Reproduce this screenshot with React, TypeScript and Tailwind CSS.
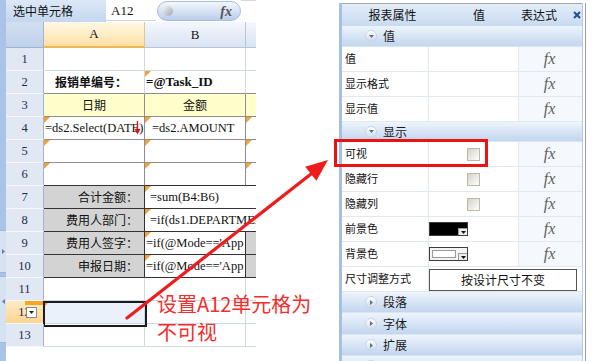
import React from "react";

const SERIF = "font-['Liberation_Serif','Noto_Sans_CJK_SC',serif]";
const CJK = "font-['Noto_Sans_CJK_SC','Liberation_Sans',sans-serif]";

const Tri = () => (
  <span className="absolute left-0 top-0 w-0 h-0 border-t-[6px] border-t-[#f2a23a] border-r-[6px] border-r-transparent" />
);

function RowHead({ n, sel }: { n: number; sel?: boolean }) {
  return (
    <div
      className={`relative w-[38px] h-full shrink-0 flex items-center justify-center border-r border-r-[#9fb4d1] border-b border-b-[#f4f7fb] ${SERIF} text-[12.5px] text-[#1c2d4b] ${
        sel ? "bg-linear-to-b from-[#fdebc4] to-[#fcd590]" : "bg-[#e1e8f3]"
      }`}
    >
      {n}
      {sel && (
        <>
          <span className="absolute right-0 top-0 w-[18px] h-[4px] bg-[#f5a623]" />
          <span className="absolute left-[20px] top-[6px] w-[11px] h-[11px] bg-white border border-[#8a8a8a] flex items-center justify-center">
            <svg width="5" height="3" viewBox="0 0 5 3">
              <path d="M0 0H5L2.5 3Z" fill="#222" />
            </svg>
          </span>
        </>
      )}
    </div>
  );
}

function Fx() {
  return (
    <div className="flex-1 bg-[#f5f8fd] flex items-center justify-center">
      <span className={`${SERIF} italic text-[16px] text-[#5f5f5f] pr-[2px]`}>fx</span>
    </div>
  );
}

function Prop({ name, children, fx = true }: { name: string; children?: React.ReactNode; fx?: boolean }) {
  return (
    <div className="flex h-[25px] border-b border-[#e2e8f0]">
      <div className={`w-[87px] shrink-0 border-r border-[#e2e8f0] bg-white pl-[3px] pt-[5px] text-[11px] leading-[13px] text-[#111] ${CJK}`}>
        {name}
      </div>
      {fx ? (
        <>
          <div className="w-[90px] shrink-0 border-r border-[#e2e8f0] bg-white">{children}</div>
          <Fx />
        </>
      ) : (
        <div className="flex-1 bg-white">{children}</div>
      )}
    </div>
  );
}

function Group({ label, open, h }: { label: string; open?: boolean; h: string }) {
  return (
    <div className={`flex items-center ${h} shrink-0 bg-linear-to-b from-[#eef4fc] to-[#c2d6ef] border-b border-[#dbe6f4]`}>
      <div className="ml-[23px] w-[12px] h-[12px] rounded-full bg-linear-to-b from-white to-[#d0dbea] border border-[#c9d5e5] flex items-center justify-center">
        {open ? (
          <svg width="5" height="3" viewBox="0 0 5 3">
            <path d="M0 0H5L2.5 3Z" fill="#5b6f8e" />
          </svg>
        ) : (
          <svg width="3" height="5" viewBox="0 0 3 5">
            <path d="M0 0V5L3 2.5Z" fill="#5b6f8e" />
          </svg>
        )}
      </div>
      <span className={`ml-[6px] text-[12px] text-[#1a1a1a] ${CJK}`}>{label}</span>
    </div>
  );
}

function Checkbox() {
  return (
    <div className="ml-[38px] mt-[6px] w-[13px] h-[13px] border border-[#c2b9a5] bg-linear-to-br from-[#d4d2ca] to-white" />
  );
}

function ColorBox({ dark }: { dark?: boolean }) {
  return (
    <div className={`relative mt-[5px] w-[39px] h-[14px] border border-[#3c3c3c] ${dark ? "bg-black" : "bg-[#f4f4f4] p-[2px]"}`}>
      {!dark && <div className="w-[24px] h-[8px] bg-white border border-[#9a9a9a]" />}
      <span className="absolute right-0 bottom-0 w-[9px] h-[7px] bg-[#ececec] border-l border-t border-[#9a9a9a] flex items-end justify-center pb-[1px]">
        <svg width="5" height="3" viewBox="0 0 5 3">
          <path d="M0 0H5L2.5 3Z" fill="#111" />
        </svg>
      </span>
    </div>
  );
}

const L = "border-[#d0d7e5]";

export default function App() {
  return (
    <div className={`relative w-[606px] h-[361px] bg-white overflow-hidden flex ${CJK}`}>
      {/* left strip */}
      <div className="w-[6px] h-full shrink-0 flex flex-col bg-[#a9c4e7]">
        <div className="h-[230px]" />
        <div className="h-[43px] bg-[#d6e2f2] border-y border-[#9fb8da] flex items-center justify-center">
          <svg width="3" height="5" viewBox="0 0 3 5">
            <path d="M0 0V5L3 2.5Z" fill="#5b7fb0" />
          </svg>
        </div>
        <div className="h-[3px]" />
        <div className="h-[67px] bg-[#d6e2f2] border-y border-[#9fb8da] flex items-start justify-center pt-[22px]">
          <svg width="3" height="5" viewBox="0 0 3 5">
            <path d="M3 0V5L0 2.5Z" fill="#5b7fb0" />
          </svg>
        </div>
      </div>

      {/* spreadsheet */}
      <div className="w-[250px] shrink-0 flex flex-col">
        {/* toolbar */}
        <div className="flex h-[22px] items-center">
          <div className="w-[100px] h-full bg-linear-to-b from-[#dce8f7] to-[#c4d7ef] flex items-center pl-[7px] text-[12px] text-[#111]">
            选中单元格
          </div>
          <div className={`w-[50px] h-[20px] bg-white border-b border-[#c9d6e8] flex items-center pl-[5px] ${SERIF} text-[13px] text-[#111]`}>
            A12
          </div>
          <div className="ml-[1px] w-[84px] h-[20px] rounded-full border border-[#a9bedb] bg-linear-to-b from-[#f3f7fd] via-[#d6e3f4] to-[#b9cde9] flex items-center justify-between px-[5px]">
            <span className="w-[10px] h-[10px] rounded-full bg-linear-to-br from-[#f4f4f4] to-[#9da7b4]" />
            <span className={`${SERIF} italic font-bold text-[14px] text-[#555] pr-[3px]`}>fx</span>
          </div>
          <div className="flex-1 h-full bg-white border-t border-[#d8d8d8]" />
        </div>

        {/* column header */}
        <div className={`flex h-[26px] ${SERIF} text-[13px] text-[#111]`}>
          <div className="w-[38px] bg-linear-to-b from-[#d3dff0] to-[#bfd1ea] border-r border-[#9fb4d1] border-b border-b-[#9fb4d1]" />
          <div className="w-[101px] bg-linear-to-b from-[#fff8e6] to-[#ffe0a4] border-r border-r-[#d9c7a0] border-b-2 border-b-[#f2b655] flex items-center justify-center">
            A
          </div>
          <div className="w-[101px] bg-linear-to-b from-[#f4f7fc] to-[#dae4f2] border-r border-r-[#b4c5dc] border-b border-b-[#b4c5dc] flex items-center justify-center">
            B
          </div>
          <div className="flex-1 bg-linear-to-b from-[#f4f7fc] to-[#dae4f2] border-b border-b-[#b4c5dc]" />
        </div>

        {/* row 1 */}
        <div className="flex h-[23px]">
          <RowHead n={1} />
          <div className={`w-[101px] border-r border-b ${L}`} />
          <div className={`w-[101px] border-r border-b ${L}`} />
          <div className={`flex-1 border-b ${L}`} />
        </div>
        {/* row 2 */}
        <div className="flex h-[23px]">
          <RowHead n={2} />
          <div className="w-[101px] border-r border-r-[#d0d7e5] border-b border-b-[#8e8e8e] flex items-center pl-[11px] font-bold text-[12px] text-[#111]">
            报销单编号：
          </div>
          <div className={`relative w-[101px] border-r border-r-[#d0d7e5] border-b border-b-[#8e8e8e] flex items-center pl-[1px] ${SERIF} font-bold text-[13px] text-[#111]`}>
            <Tri />
            =@Task_ID
          </div>
          <div className="flex-1 border-b border-b-[#8e8e8e]" />
        </div>
        {/* row 3 */}
        <div className="flex h-[23px] text-[12px] text-[#111]">
          <RowHead n={3} />
          <div className="w-[101px] bg-[#ffffcc] border-r border-b border-[#8e8e8e] flex items-center justify-center">日期</div>
          <div className="w-[101px] bg-[#ffffcc] border-r border-b border-[#8e8e8e] flex items-center justify-center">金额</div>
          <div className="flex-1 bg-[#ffffcc] border-b border-[#8e8e8e]" />
        </div>
        {/* row 4 */}
        <div className={`flex h-[23px] ${SERIF} text-[12.5px] text-[#111]`}>
          <RowHead n={4} />
          <div className="relative w-[101px] border-r border-b border-[#8e8e8e] flex items-center pl-[1px] overflow-hidden whitespace-nowrap">
            <Tri />
            =ds2.Select(DATE)
            <svg className="absolute left-[90px] top-[4px]" width="7" height="14" viewBox="0 0 7 14">
              <path d="M3.5 0V12" stroke="#e01010" strokeWidth="1.3" />
              <path d="M0.5 8L3.5 13.5L6.5 8Z" fill="#e01010" />
            </svg>
          </div>
          <div className="relative w-[101px] border-r border-b border-[#8e8e8e] flex items-center pl-[7px]">
            <Tri />
            =ds2.AMOUNT
          </div>
          <div className="relative flex-1 border-b border-[#8e8e8e]">
            <Tri />
          </div>
        </div>
        {/* row 5 */}
        <div className="flex h-[23px]">
          <RowHead n={5} />
          <div className="relative w-[101px] border-r border-b border-[#8e8e8e]">
            <Tri />
          </div>
          <div className="relative w-[101px] border-r border-b border-[#8e8e8e]">
            <Tri />
          </div>
          <div className="relative flex-1 border-b border-[#8e8e8e]">
            <Tri />
          </div>
        </div>
        {/* row 6 */}
        <div className="flex h-[23px]">
          <RowHead n={6} />
          <div className="relative w-[101px] border-r border-r-[#8e8e8e] border-b border-b-[#333]">
            <Tri />
          </div>
          <div className="relative w-[101px] border-r border-r-[#8e8e8e] border-b border-b-[#333]">
            <Tri />
          </div>
          <div className="relative flex-1 border-b border-b-[#333]">
            <Tri />
          </div>
        </div>
        {/* row 7 */}
        <div className="flex h-[23px] text-[12px] text-[#111]">
          <RowHead n={7} />
          <div className="w-[101px] bg-[#d3d3d3] border-r border-b border-[#333] flex items-center justify-end pr-[6px]">合计金额：</div>
          <div className={`relative flex-1 border-b border-[#333] flex items-center pl-[5px] ${SERIF} text-[12.5px] whitespace-nowrap overflow-hidden`}>
            <Tri />
            =sum(B4:B6)
          </div>
        </div>
        {/* row 8 */}
        <div className="flex h-[23px] text-[12px] text-[#111]">
          <RowHead n={8} />
          <div className="w-[101px] bg-[#d3d3d3] border-r border-b border-[#333] flex items-center justify-end pr-[6px]">费用人部门：</div>
          <div className={`relative flex-1 border-b border-[#333] flex items-center pl-[5px] ${SERIF} text-[12.5px] whitespace-nowrap overflow-hidden`}>
            <Tri />
            =if(ds1.DEPARTMENT
          </div>
        </div>
        {/* row 9 */}
        <div className="flex h-[23px] text-[12px] text-[#111]">
          <RowHead n={9} />
          <div className="w-[101px] bg-[#d3d3d3] border-r border-b border-[#333] flex items-center justify-end pr-[6px]">费用人签字：</div>
          <div className={`relative w-[101px] border-r border-b border-[#333] flex items-center pl-[1px] ${SERIF} text-[12.5px] whitespace-nowrap overflow-hidden`}>
            <Tri />
            =if(@Mode=='App
          </div>
          <div className="flex-1 bg-[#d3d3d3] border-b border-[#333]" />
        </div>
        {/* row 10 */}
        <div className="flex h-[23px] text-[12px] text-[#111]">
          <RowHead n={10} />
          <div className="w-[101px] bg-[#d3d3d3] border-r border-b border-[#333] flex items-center justify-end pr-[6px]">申报日期：</div>
          <div className={`relative w-[101px] border-r border-b border-[#333] flex items-center pl-[1px] ${SERIF} text-[12.5px] whitespace-nowrap overflow-hidden`}>
            <Tri />
            =if(@Mode=='App
          </div>
          <div className="flex-1 bg-[#d3d3d3] border-b border-[#333]" />
        </div>
        {/* row 11 */}
        <div className="flex h-[23px]">
          <RowHead n={11} />
          <div className={`w-[101px] border-r border-b ${L}`} />
          <div className={`w-[101px] border-r border-b ${L}`} />
          <div className={`flex-1 border-b ${L}`} />
        </div>
        {/* row 12 */}
        <div className="flex h-[23px]">
          <RowHead n={12} sel />
          <div className={`relative w-[101px] bg-[#eaf1fb] border-r border-b ${L}`}>
            <Tri />
            <span className="absolute -left-[1px] top-0 w-[104px] h-[26px] border-2 border-[#1c1c1c]" />
          </div>
          <div className={`w-[101px] border-r border-b ${L}`} />
          <div className={`flex-1 border-b ${L}`} />
        </div>
        {/* row 13 */}
        <div className="flex h-[23px]">
          <RowHead n={13} />
          <div className={`w-[101px] border-r border-b ${L}`} />
          <div className={`w-[101px] border-r border-b ${L}`} />
          <div className={`flex-1 border-b ${L}`} />
        </div>
      </div>

      {/* gap */}
      <div className="w-[83px] shrink-0" />

      {/* property panel */}
      <div className="w-[248px] shrink-0 h-full flex pt-[3px]">
        <div className="w-[3px] bg-[#a5c0e4]" />
        <div className="w-[240px] flex flex-col">
          <div className={`flex items-center h-[23px] shrink-0 border-t border-[#a6a6a6] bg-linear-to-b from-[#e3edf9] to-[#c9dbf1] text-[12px] text-[#111]`}>
            <div className="w-[87px] pl-[14px] text-center">报表属性</div>
            <div className="w-[90px] pl-[10px] text-center">值</div>
            <div className="pl-[2px]">表达式</div>
            <svg className="ml-[16px]" width="8" height="8" viewBox="0 0 8 8">
              <path d="M1 1L7 7M7 1L1 7" stroke="#1f4f9e" strokeWidth="2" />
            </svg>
          </div>
          <Group label="值" open h="h-[21px]" />
          <Prop name="值" />
          <Prop name="显示格式" />
          <Prop name="显示值" />
          <Group label="显示" open h="h-[20px]" />
          <Prop name="可视">
            <Checkbox />
          </Prop>
          <Prop name="隐藏行">
            <Checkbox />
          </Prop>
          <Prop name="隐藏列">
            <Checkbox />
          </Prop>
          <Prop name="前景色">
            <ColorBox dark />
          </Prop>
          <Prop name="背景色">
            <ColorBox />
          </Prop>
          <Prop name="尺寸调整方式" fx={false}>
            <div className="mt-[2px] w-[148px] h-[22px] border border-[#555] bg-white flex items-center justify-center text-[12px] text-[#111]">
              按设计尺寸不变
            </div>
          </Prop>
          <Group label="段落" h="h-[21px]" />
          <Group label="字体" h="h-[22px]" />
          <Group label="扩展" h="h-[21px]" />
          <Group label="" h="h-[21px]" />
        </div>
        <div className="w-[1px] bg-[#b6cbe6]" />
        <div className="w-[2px]" />
        <div className="w-[1px] bg-[#9c9c9c]" />
      </div>

      {/* annotation overlays */}
      <div className="pointer-events-none absolute left-[334px] top-[139px] w-[154px] h-[28px] border-[3px] border-[#ee1111]" />
      <svg className="pointer-events-none absolute left-0 top-0" width="606" height="361" viewBox="0 0 606 361">
        <path d="M127 318L311 174" stroke="#ee1c1c" strokeWidth="3.2" strokeLinecap="round" />
        <path d="M328 160L316.4 180.7L305.2 166.7Z" fill="#ee1c1c" />
      </svg>
      <div className="pointer-events-none absolute left-[157px] top-[290px] text-[20px] leading-[28px] text-[#f22e2e]">
        设置A12单元格为
        <br />
        不可视
      </div>
    </div>
  );
}
